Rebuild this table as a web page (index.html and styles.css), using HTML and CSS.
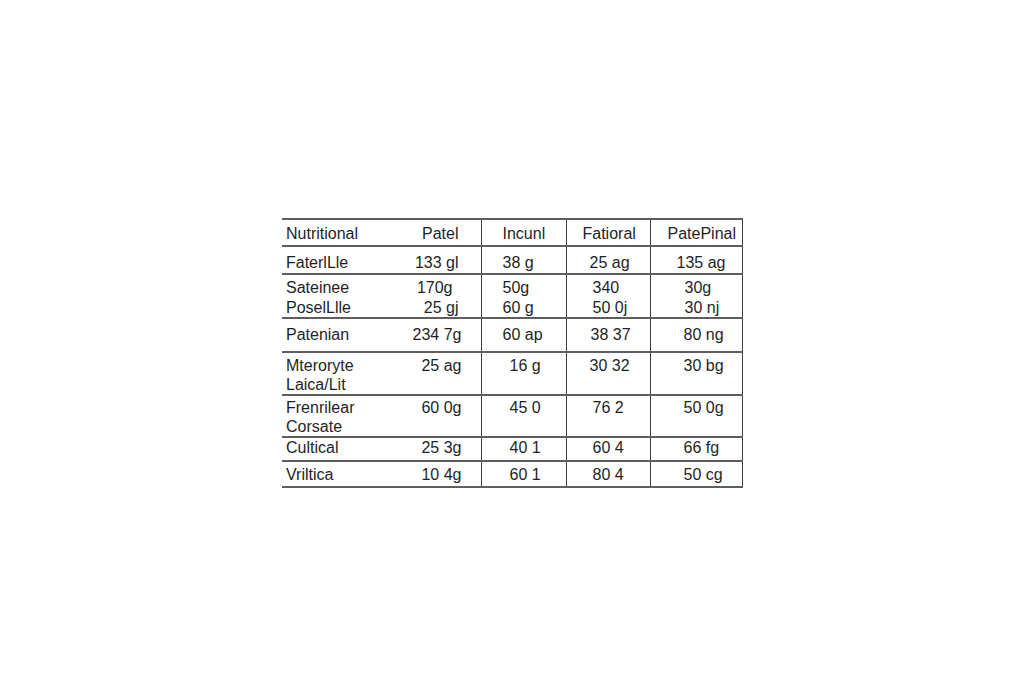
FILE: index.html
```html
<!DOCTYPE html>
<html lang="en">
<head>
<meta charset="utf-8">
<title>Nutritional table</title>
<link rel="stylesheet" href="styles.css">
</head>
<body>
<table class="nutri">
  <colgroup>
    <col class="w-label">
    <col class="w-patel">
    <col class="w-inc">
    <col class="w-fat">
    <col class="w-pp">
  </colgroup>
  <thead>
    <tr class="r-head">
      <th class="c1">Nutritional</th>
      <th class="c2"><div class="e22">Patel</div></th>
      <th class="c3"><div class="i22">Incunl</div></th>
      <th class="c4"><div class="i16">Fatioral</div></th>
      <th class="c5"><div class="i17">PatePinal</div></th>
    </tr>
  </thead>
  <tbody>
    <tr class="r1">
      <td class="c1">FaterlLle</td>
      <td class="c2"><div class="e22">133 gl</div></td>
      <td class="c3"><div class="i22">38 g</div></td>
      <td class="c4"><div class="i23">25 ag</div></td>
      <td class="c5"><div class="i26">135 ag</div></td>
    </tr>
    <tr class="r2">
      <td class="c1"><div>Sateinee</div><div>PoselLlle</div></td>
      <td class="c2"><div class="e28">170g</div><div class="e22">25 gj</div></td>
      <td class="c3"><div class="i22">50g</div><div class="i22">60 g</div></td>
      <td class="c4"><div class="i26">340</div><div class="i26">50 0j</div></td>
      <td class="c5"><div class="i34">30g</div><div class="i34">30 nj</div></td>
    </tr>
    <tr class="r3">
      <td class="c1">Patenian</td>
      <td class="c2"><div class="e19">234 7g</div></td>
      <td class="c3"><div class="i22">60 ap</div></td>
      <td class="c4"><div class="i24">38 37</div></td>
      <td class="c5"><div class="i33">80 ng</div></td>
    </tr>
    <tr class="r4">
      <td class="c1"><div>Mteroryte</div><div>Laica/Lit</div></td>
      <td class="c2"><div class="e19">25 ag</div></td>
      <td class="c3"><div class="i28">16 g</div></td>
      <td class="c4"><div class="i23">30 32</div></td>
      <td class="c5"><div class="i33">30 bg</div></td>
    </tr>
    <tr class="r5">
      <td class="c1"><div>Frenrilear</div><div>Corsate</div></td>
      <td class="c2"><div class="e19">60 0g</div></td>
      <td class="c3"><div class="i28">45 0</div></td>
      <td class="c4"><div class="i26">76 2</div></td>
      <td class="c5"><div class="i33">50 0g</div></td>
    </tr>
    <tr class="r6">
      <td class="c1">Cultical</td>
      <td class="c2"><div class="e19">25 3g</div></td>
      <td class="c3"><div class="i28">40 1</div></td>
      <td class="c4"><div class="i26">60 4</div></td>
      <td class="c5"><div class="i33">66 fg</div></td>
    </tr>
    <tr class="r7">
      <td class="c1">Vriltica</td>
      <td class="c2"><div class="e19">10 4g</div></td>
      <td class="c3"><div class="i28">60 1</div></td>
      <td class="c4"><div class="i26">80 4</div></td>
      <td class="c5"><div class="i33">50 cg</div></td>
    </tr>
  </tbody>
</table>
</body>
</html>
```

FILE: styles.css
```css
html, body {
  margin: 0;
  padding: 0;
  background: #ffffff;
}

body {
  font-family: "Liberation Sans", Arial, sans-serif;
  font-size: 16px;
  line-height: 20px;
  color: #1f1f1f;
}

.nutri {
  border-collapse: collapse;
  table-layout: fixed;
  width: 460px;
  margin: 218px 0 0 282px;
}

.w-label { width: 118px; }
.w-patel { width: 81px; }
.w-inc { width: 85px; }
.w-fat { width: 84px; }
.w-pp { width: 92px; }

.nutri th,
.nutri td {
  font-weight: normal;
  text-align: left;
  vertical-align: top;
  padding: 0;
  border-top: 2px solid #5e5e5e;
  border-bottom: 2px solid #5e5e5e;
  white-space: nowrap;
  box-sizing: border-box;
}

.nutri .c1 { padding-left: 4px; }
.nutri .c2 { text-align: right; }
.nutri .c3,
.nutri .c4,
.nutri .c5 { border-left: 1px solid #3c3c3c; }
.nutri .c5 { border-right: 1px solid #3c3c3c; }

/* horizontal end offsets for the second column */
.e19 { padding-right: 19px; }
.e22 { padding-right: 22px; }
.e28 { padding-right: 28px; }

/* left insets for value columns */
.i16 { padding-left: 16px; }
.i17 { padding-left: 17px; }
.i22 { padding-left: 21px; }
.i23 { padding-left: 23px; }
.i24 { padding-left: 24px; }
.i26 { padding-left: 26px; }
.i28 { padding-left: 28px; }
.i33 { padding-left: 33px; }
.i34 { padding-left: 34px; }

/* row heights and text offsets */
.nutri .r-head { height: 27px; }
.nutri .r-head > * { padding-top: 4px; }
.nutri .r1 { height: 28px; }
.nutri .r1 > * { padding-top: 6px; }
.nutri .r2 { height: 44px; }
.nutri .r2 > * { padding-top: 3px; line-height: 19.5px; }
.nutri .r3 { height: 34px; }
.nutri .r3 > * { padding-top: 6px; }
.nutri .r4 { height: 43px; }
.nutri .r4 > * { padding-top: 3px; line-height: 19px; }
.nutri .r5 { height: 42px; }
.nutri .r5 > * { padding-top: 2px; line-height: 19px; }
.nutri .r6 { height: 24px; }
.nutri .r6 > * { padding-top: 0; }
.nutri .r7 { height: 26px; }
.nutri .r7 > * { padding-top: 3px; }
```
